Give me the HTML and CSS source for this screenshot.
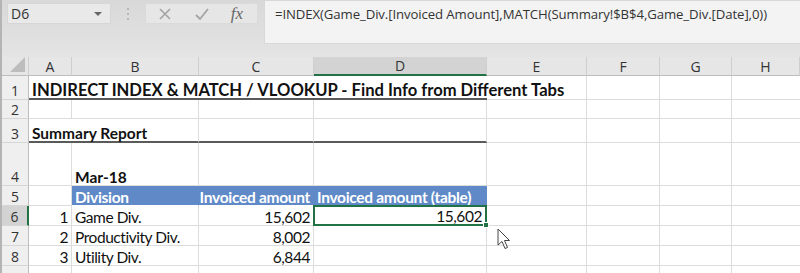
FILE: index.html
```html
<!DOCTYPE html>
<html>
<head>
<meta charset="utf-8">
<link rel="stylesheet" href="styles.css">
</head>
<body>
<div class="app">
  <div class="toolbar">
    <div class="namebox"><span>D6</span><span class="caret"></span></div>
    <div class="dots"><i></i><i></i><i></i></div>
    <div class="fbuttons">
      <svg class="ico" width="16" height="16" viewBox="0 0 16 16"><path d="M3 3L13 13M13 3L3 13" stroke="#a3a3a3" stroke-width="1.6" fill="none"/></svg>
      <svg class="ico" width="16" height="16" viewBox="0 0 16 16"><path d="M2 9L6 13L14 3" stroke="#a3a3a3" stroke-width="1.8" fill="none"/></svg>
      <span class="fx">fx</span>
    </div>
    <div class="formula">=INDEX(Game_Div.[Invoiced Amount],MATCH(Summary!$B$4,Game_Div.[Date],0))</div>
  </div>
  <div class="sheet">
    <!-- header row -->
    <div class="ch corner"><span class="tri"></span></div>
    <div class="ch">A</div>
    <div class="ch">B</div>
    <div class="ch">C</div>
    <div class="ch sel">D</div>
    <div class="ch">E</div>
    <div class="ch">F</div>
    <div class="ch">G</div>
    <div class="ch last">H</div>

    <!-- row 1 -->
    <div class="rh">1</div>
    <div class="c title span-ae">INDIRECT INDEX &amp; MATCH / VLOOKUP - Find Info from Different Tabs</div>
    <div class="c"></div>
    <div class="c"></div>
    <div class="c last"></div>

    <!-- row 2 -->
    <div class="rh">2</div>
    <div class="c"></div><div class="c"></div><div class="c"></div><div class="c"></div><div class="c"></div><div class="c"></div><div class="c"></div><div class="c last"></div>

    <!-- row 3 -->
    <div class="rh">3</div>
    <div class="c bold thick span-ab">Summary Report</div>
    <div class="c thick"></div>
    <div class="c thick"></div>
    <div class="c"></div><div class="c"></div><div class="c"></div><div class="c last"></div>

    <!-- row 4 -->
    <div class="rh">4</div>
    <div class="c"></div>
    <div class="c bold">Mar-18</div>
    <div class="c"></div><div class="c"></div><div class="c"></div><div class="c"></div><div class="c"></div><div class="c last"></div>

    <!-- row 5 -->
    <div class="rh">5</div>
    <div class="c"></div>
    <div class="c hd">Division</div>
    <div class="c hd r">Invoiced amount</div>
    <div class="c hd">Invoiced amount (table)</div>
    <div class="c"></div><div class="c"></div><div class="c"></div><div class="c last"></div>

    <!-- row 6 -->
    <div class="rh rsel">6</div>
    <div class="c r">1</div>
    <div class="c">Game Div.</div>
    <div class="c r">15,602</div>
    <div class="c r active">15,602<span class="handle"></span></div>
    <div class="c"></div><div class="c"></div><div class="c"></div><div class="c last"></div>

    <!-- row 7 -->
    <div class="rh">7</div>
    <div class="c r">2</div>
    <div class="c">Productivity Div.</div>
    <div class="c r">8,002</div>
    <div class="c"></div><div class="c"></div><div class="c"></div><div class="c"></div><div class="c last"></div>

    <!-- row 8 -->
    <div class="rh">8</div>
    <div class="c r">3</div>
    <div class="c">Utility Div.</div>
    <div class="c r">6,844</div>
    <div class="c"></div><div class="c"></div><div class="c"></div><div class="c"></div><div class="c last"></div>

    <!-- row 9 -->
    <div class="rh"></div>
    <div class="c"></div><div class="c"></div><div class="c"></div><div class="c"></div><div class="c"></div><div class="c"></div><div class="c"></div><div class="c last"></div>

    <svg class="cursor" width="16" height="22" viewBox="0 0 16 22"><path d="M1 1L1 17L5 13.5L8 20.5L10.5 19.5L7.5 12.5L12.5 12.5Z" fill="#fff" stroke="#444" stroke-width="1" stroke-linejoin="round"/></svg>
  </div>
</div>
</body>
</html>
```

FILE: styles.css
```css
* { box-sizing: border-box; }
html, body { margin: 0; padding: 0; }
body { width: 800px; height: 273px; overflow: hidden; background: #fff; }
.app { width: 800px; height: 273px; overflow: hidden; border-left: 2px solid #b4b4b4; }

.toolbar {
  height: 57px;
  display: flex;
  align-items: flex-start;
  padding: 3px 0 0 5px;
  background: linear-gradient(#d8d8d8, #e4e4e4);
  font-family: "Open Sans", "Noto Sans", sans-serif;
  color: #333;
}
.namebox {
  width: 104px; height: 21px;
  background: #e9e9e9;
  border: 1px solid #d6d6d6;
  display: flex; align-items: center; justify-content: space-between;
  padding: 0 8px 0 3px;
  font-size: 14px; color: #333;
}
.caret { width: 0; height: 0; border-left: 4px solid transparent; border-right: 4px solid transparent; border-top: 4px solid #666; }
.dots { width: 34px; height: 21px; display: flex; flex-direction: column; align-items: center; justify-content: center; gap: 3px; }
.dots i { width: 2px; height: 2px; background: #b8b8b8; display: block; }
.fbuttons {
  width: 113px; height: 21px;
  background: #e6e6e6;
  border: 1px solid #dadada;
  display: flex; align-items: center; justify-content: space-between;
  padding: 0 14px 0 11px;
}
.fx { font-family: "Liberation Serif", serif; font-style: italic; font-size: 17px; color: #666; line-height: 1; }
.formula {
  margin-top: -3px; margin-left: 6px;
  flex: 1; height: 44px;
  background: #f3f3f3;
  border: 1px solid #d8d8d8; border-right: none;
  padding: 4px 0 0 10px;
  font-size: 13.2px; color: #333; white-space: nowrap; letter-spacing: -0.1px;
}

.sheet {
  position: relative;
  display: grid;
  grid-template-columns: 27px 43px 127px 115px 173px 100px 73px 72px 68px;
  grid-template-rows: 19px 24px 19px 24px 43px 20px 20px 20px 20px 20px;
  font-family: "Lato", "Open Sans", sans-serif;
  font-size: 15.5px;
  color: #111;
}
.ch {
  background: #e6e6e6;
  border-right: 1px solid #cfcfcf;
  border-bottom: 1px solid #bdbdbd;
  display: flex; align-items: center; justify-content: center;
  font-family: "Open Sans", sans-serif; font-size: 14px; color: #333;
}
.ch.sel { background: #d3d3d3; border-bottom: 2px solid #217346; color: #333; }
.corner { position: relative; background: #e6e6e6; }
.tri { position: absolute; right: 3px; bottom: 3px; width: 0; height: 0; border-left: 15px solid transparent; border-bottom: 15px solid #bdbdbd; }
.rh {
  background: #efefef;
  border-right: 1px solid #bdbdbd;
  border-bottom: 1px solid #d6d6d6;
  display: flex; align-items: flex-end; justify-content: center;
  font-family: "Open Sans", sans-serif; font-size: 14px; color: #333; line-height: 16px;
}
.rh.rsel { background: #d3d3d3; border-right: 2px solid #217346; }
.c {
  border-right: 1px solid #dcdcdc;
  border-bottom: 1px solid #dcdcdc;
  display: flex; align-items: flex-end;
  padding: 0 3px;
  white-space: nowrap;
  line-height: 15px;
  letter-spacing: -0.45px;
}
.c.r { justify-content: flex-end; }
.c.bold { font-weight: 700; letter-spacing: 0; }
.c.title { position: relative; font-weight: 700; font-size: 16.6px; line-height: 18px; letter-spacing: 0; }
.c.title::after { content: ""; position: absolute; left: 0; bottom: -1px; width: 458px; height: 2px; background: #5a5a5a; }
.span-ae { grid-column: 2 / 7; }
.span-ab { grid-column: 2 / 4; }
.c.thick { border-bottom: 2px solid #5a5a5a; }
.c.hd { background: #5f8ac7; color: #fff; font-weight: 700; letter-spacing: -0.3px; border-right-color: #5f8ac7; border-bottom-color: #fff; }
.c.active { position: relative; border: 2px solid #217346; margin: -1px 0 0 -1px; padding-right: 3px; }
.handle { position: absolute; right: -4px; bottom: -4px; width: 6px; height: 6px; background: #217346; border: 1px solid #fff; }
.c.last { border-right: none; }
.cursor { position: absolute; left: 495px; top: 171px; }
```
